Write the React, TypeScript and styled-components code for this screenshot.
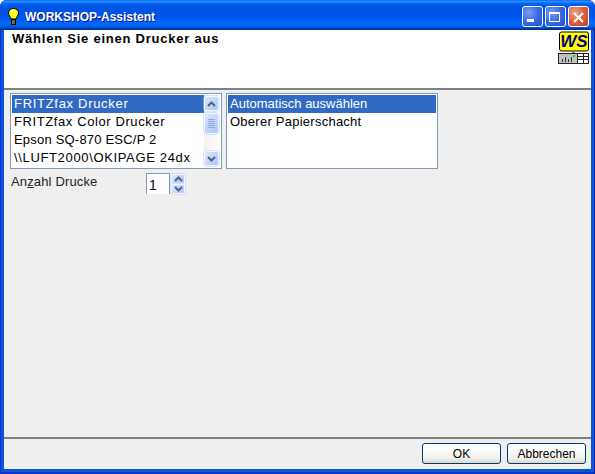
import styled, { createGlobalStyle } from "styled-components";

const GlobalStyle = createGlobalStyle`
  html, body {
    margin: 0;
    padding: 0;
    background: #fff;
  }
`;

const WindowFrame = styled.div`
  width: 595px;
  height: 474px;
  display: flex;
  flex-direction: column;
  overflow: hidden;
  border-radius: 7px 7px 0 0;
  background: #0855dd;
  box-shadow: inset 1px 0 #0831d9, inset -1px 0 #001ea0, inset 0 -2px #0838c0;
  font-family: "Liberation Sans", Arial, sans-serif;
`;

const TitleBar = styled.div`
  height: 30px;
  flex: none;
  box-sizing: border-box;
  display: flex;
  align-items: center;
  gap: 6px;
  padding: 3px 6px 0 8px;
  background: linear-gradient(
    180deg,
    #0058ee 0%,
    #3593ff 4%,
    #288eff 6%,
    #127dff 8%,
    #036ffc 10%,
    #0262ee 14%,
    #0057e5 20%,
    #0054e3 24%,
    #0055eb 56%,
    #005bf5 66%,
    #026afe 76%,
    #0062ef 86%,
    #0052d6 92%,
    #0040ab 94%,
    #003092 100%
  );
`;

const TitleText = styled.span`
  flex: 1;
  color: #fff;
  font-size: 12px;
  font-weight: bold;
  text-shadow: 1px 1px #0f1089;
`;

const CaptionButtons = styled.div`
  display: flex;
  gap: 2px;
`;

const CaptionButton = styled.button<{ $close?: boolean }>`
  width: 21px;
  height: 21px;
  padding: 0;
  border: 1px solid #fff;
  border-radius: 3px;
  display: flex;
  align-items: center;
  justify-content: center;
  background: ${(p) =>
    p.$close
      ? "radial-gradient(circle at 30% 30%, #e8a48c 0%, #dc5f3f 50%, #c0401f 100%)"
      : "radial-gradient(circle at 30% 30%, #7a9cf0 0%, #3568e0 55%, #2450cc 100%)"};
`;

const Client = styled.div`
  flex: 1;
  margin: 0 4px 5px;
  display: flex;
  flex-direction: column;
  background: #efefef;
`;

const Header = styled.div`
  height: 60px;
  flex: none;
  display: flex;
  justify-content: space-between;
  padding: 1px 1px 0 8px;
  box-sizing: border-box;
  background: #fff;
  border-bottom: 2px solid #808080;
`;

const Heading = styled.h1`
  margin: 0;
  font-size: 13px;
  line-height: 15px;
  font-weight: bold;
  color: #000;
  letter-spacing: 0.77px;
`;

const Content = styled.div`
  flex: 1;
  display: flex;
  flex-direction: column;
  gap: 4px;
  padding: 3px 0 0 6px;
`;

const ListRow = styled.div`
  display: flex;
  gap: 4px;
`;

const ListBox = styled.div`
  width: 212px;
  height: 76px;
  box-sizing: border-box;
  border: 1px solid #7f9db9;
  padding: 1px;
  display: flex;
  background: #fff;
`;

const Items = styled.div`
  flex: 1;
  display: flex;
  flex-direction: column;
`;

const Item = styled.div<{ $selected?: boolean; $tracking: number }>`
  height: 18px;
  line-height: 18px;
  padding-left: 2px;
  font-size: 13px;
  letter-spacing: ${(p) => p.$tracking}px;
  white-space: nowrap;
  color: ${(p) => (p.$selected ? "#fff" : "#000")};
  background: ${(p) => (p.$selected ? "#316ac5" : "transparent")};
`;

const ScrollBar = styled.div`
  width: 16px;
  display: flex;
  flex-direction: column;
  padding: 1px 1px 1px 0;
  box-sizing: border-box;
  background: linear-gradient(90deg, #f3f1ec, #fefefb);
`;

const ScrollButton = styled.div`
  width: 15px;
  height: 15px;
  flex: none;
  box-sizing: border-box;
  border: 1px solid #f4f7ff;
  border-radius: 2px;
  display: flex;
  align-items: center;
  justify-content: center;
  background: linear-gradient(135deg, #dde7fe, #c1d3fb 60%, #aec4f6);
  box-shadow: 0 0 0 0.5px #b9cbf5;
`;

const ScrollThumb = styled(ScrollButton)`
  height: 21px;
  margin-top: 2px;
  margin-bottom: auto;
`;

const CopiesRow = styled.div`
  display: flex;
  align-items: flex-start;
`;

const CopiesLabel = styled.label`
  width: 135px;
  padding-left: 1px;
  font-size: 13px;
  line-height: 18px;
  letter-spacing: 0.15px;
  color: #222;
`;

const SpinInput = styled.div`
  width: 24px;
  height: 21px;
  box-sizing: border-box;
  border: 1px solid #7f9db9;
  border-bottom: none;
  padding: 2px 0 0 2px;
  background: #fff;
  font-size: 14px;
  line-height: 18px;
  color: #000;
`;

const SpinButtons = styled.div`
  display: flex;
  flex-direction: column;
  padding: 1px 0 0 1px;
`;

const SpinButton = styled(ScrollButton)`
  width: 14px;
  height: 10px;
`;

const Footer = styled.div`
  height: 32px;
  flex: none;
  display: flex;
  justify-content: flex-end;
  gap: 6px;
  padding: 4px 5px 0 0;
  box-sizing: border-box;
  border-top: 2px solid #808080;
`;

const PushButton = styled.button`
  width: 79px;
  height: 21px;
  padding: 0;
  box-sizing: border-box;
  border: 1px solid #003c74;
  border-radius: 3px;
  background: linear-gradient(180deg, #fff 0%, #f4f4ee 70%, #dcd8ce 100%);
  font-family: "Liberation Sans", Arial, sans-serif;
  font-size: 12px;
  color: #000;
`;

function Chevron({ up }: { up?: boolean }) {
  return (
    <svg width="9" height="6" viewBox="0 0 9 6">
      <path
        d={up ? "M1 5 L4.5 1.5 L8 5" : "M1 1 L4.5 4.5 L8 1"}
        fill="none"
        stroke="#4d6185"
        strokeWidth="2"
      />
    </svg>
  );
}

function Bulb() {
  return (
    <svg width="11" height="17" viewBox="0 0 11 17">
      <path
        d="M5.5 0.5 C2.5 0.5 0.5 2.5 0.5 5 C0.5 7.5 2.5 8.5 3 11 H8 C8.5 8.5 10.5 7.5 10.5 5 C10.5 2.5 8.5 0.5 5.5 0.5 Z"
        fill="#ffff20"
        stroke="#000"
      />
      <path d="M3 3 L5 2" stroke="#fff" strokeWidth="1.5" />
      <rect x="3.5" y="11.5" width="4" height="5" fill="#6e6e30" stroke="#000" />
    </svg>
  );
}

function Logo() {
  return (
    <svg width="33" height="33" viewBox="0 0 33 33">
      <rect x="2.5" y="1" width="29" height="19" rx="2" fill="#ffff00" stroke="#000" />
      <text
        x="17"
        y="16"
        textAnchor="middle"
        fontFamily="Liberation Sans, Arial, sans-serif"
        fontSize="17"
        fontWeight="bold"
        fontStyle="italic"
        fill="#000080"
      >
        WS
      </text>
      <rect x="15" y="20" width="3" height="2" fill="#777" />
      <rect x="1.5" y="22.5" width="30" height="10" fill="#c0c0c0" stroke="#222" />
      <rect x="21" y="23" width="10" height="9" fill="#fff" />
      <path d="M20.5 23 V32 M21 25.5 H31 M21 28.5 H31 M26.5 23 V32" stroke="#222" />
      <path d="M5.5 28 V31 M8.5 26 V31 M11.5 28 V31 M14.5 26 V31" stroke="#333" />
      <rect x="16" y="24" width="2" height="2" fill="#00e000" />
    </svg>
  );
}

export default function App() {
  return (
    <>
      <GlobalStyle />
      <WindowFrame>
        <TitleBar>
          <Bulb />
          <TitleText>WORKSHOP-Assistent</TitleText>
          <CaptionButtons>
            <CaptionButton aria-label="Minimieren">
              <svg width="13" height="13" viewBox="0 0 13 13">
                <rect x="1" y="9" width="7" height="3" fill="#fff" />
              </svg>
            </CaptionButton>
            <CaptionButton aria-label="Maximieren">
              <svg width="13" height="13" viewBox="0 0 13 13">
                <path d="M0.5 3.5 H10.5 V11.5 H0.5 Z" fill="none" stroke="#fff" />
                <rect x="0" y="2" width="11" height="2" fill="#fff" />
              </svg>
            </CaptionButton>
            <CaptionButton $close aria-label="Schließen">
              <svg width="13" height="13" viewBox="0 0 13 13">
                <path d="M2 3 L11 12 M11 3 L2 12" stroke="#fff" strokeWidth="2" />
              </svg>
            </CaptionButton>
          </CaptionButtons>
        </TitleBar>
        <Client>
          <Header>
            <Heading>Wählen Sie einen Drucker aus</Heading>
            <Logo />
          </Header>
          <Content>
            <ListRow>
              <ListBox>
                <Items>
                  <Item $selected $tracking={0.7}>FRITZfax Drucker</Item>
                  <Item $tracking={0.6}>FRITZfax Color Drucker</Item>
                  <Item $tracking={0.2}>Epson SQ-870 ESC/P 2</Item>
                  <Item $tracking={0.65}>\\LUFT2000\OKIPAGE 24dx</Item>
                </Items>
                <ScrollBar>
                  <ScrollButton>
                    <Chevron up />
                  </ScrollButton>
                  <ScrollThumb>
                    <svg width="7" height="9" viewBox="0 0 7 9">
                      <path d="M0 0.5 H7 M0 2.5 H7 M0 4.5 H7 M0 6.5 H7 M0 8.5 H7" stroke="#8ea7dc" />
                    </svg>
                  </ScrollThumb>
                  <ScrollButton>
                    <Chevron />
                  </ScrollButton>
                </ScrollBar>
              </ListBox>
              <ListBox>
                <Items>
                  <Item $selected $tracking={0}>Automatisch auswählen</Item>
                  <Item $tracking={0.25}>Oberer Papierschacht</Item>
                </Items>
              </ListBox>
            </ListRow>
            <CopiesRow>
              <CopiesLabel>
                An<u>z</u>ahl Drucke
              </CopiesLabel>
              <SpinInput>1</SpinInput>
              <SpinButtons>
                <SpinButton>
                  <Chevron up />
                </SpinButton>
                <SpinButton>
                  <Chevron />
                </SpinButton>
              </SpinButtons>
            </CopiesRow>
          </Content>
          <Footer>
            <PushButton>OK</PushButton>
            <PushButton>Abbrechen</PushButton>
          </Footer>
        </Client>
      </WindowFrame>
    </>
  );
}
